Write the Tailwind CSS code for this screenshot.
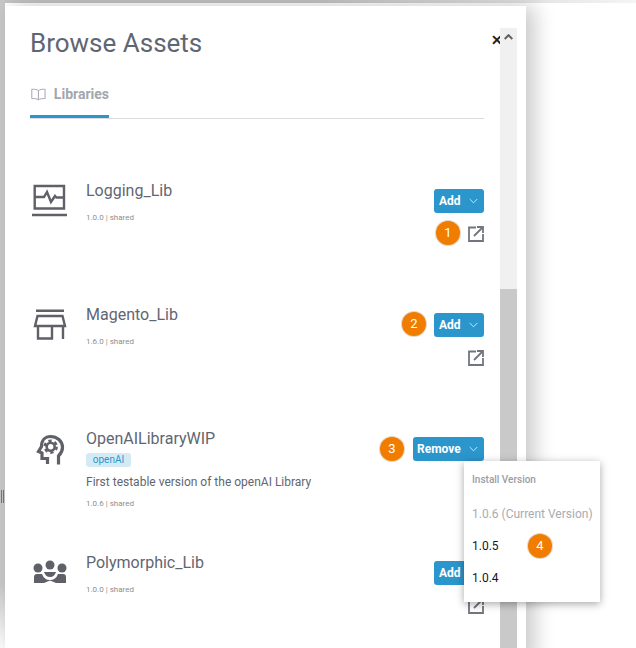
<!DOCTYPE html>
<html lang="en">
  <head>
    <meta charset="UTF-8" />
    <title>Browse Assets</title>
    <script src="https://cdn.jsdelivr.net/npm/@tailwindcss/browser@4"></script>
  </head>
  <body class="bg-white">
    <main class="relative w-[636px] h-[648px] overflow-hidden bg-white font-['Roboto',sans-serif]">
      <!-- backdrop edges -->
      <div class="h-[3px] bg-gradient-to-r from-[#c4c4c4] via-[#c4c4c4] to-[#f4f4f4]"></div>
      <div class="absolute left-0 top-0 w-[5px] h-[648px] bg-gradient-to-b from-[#c8c8c8] via-[#c8c8c8] via-90% to-white"></div>
      <div class="absolute left-[1px] top-[490px] w-[3px] h-[13px] border-x border-[#777]"></div>

      <!-- panel -->
      <section class="relative ml-[5px] mt-[3px] w-[521px] h-[660px] bg-white shadow-[8px_0_20px_rgba(0,0,0,0.22)] pl-[25px] pt-[17px]">
        <h1 class="text-[26px] leading-[40px] text-[#5f6672] font-normal">Browse Assets</h1>

        <div class="w-[454px] mt-[5px] h-[51px] border-b border-[#dcdcdc]">
          <div class="w-[79px] h-[50px] border-b-[3px] border-[#2b96cc] flex items-center gap-[8px] pl-[1px] pt-[5px]">
            <svg class="w-[15px] h-[13px]" viewBox="0 0 15 13" fill="none" stroke="#a3a6ae" stroke-width="1">
              <path d="M7.5 2.5C6 1.3 3 1 .8 1.3v9.400c2.200-.3 5.200 0 6.700 1.100 1.500-1.100 4.500-1.400 6.700-1.100V1.300C12 1 9 1.300 7.500 2.500zM7.500 2.500v9.300" />
            </svg>
            <span class="text-[14px] font-bold text-[#a3a6ae]">Libraries</span>
          </div>
        </div>

        <div class="w-[454px] mt-[60px]">
          <!-- Logging_Lib -->
          <article class="h-[124px] flex">
            <div class="w-[56px] pt-[5px]">
              <svg class="w-[38px] h-[34px]" viewBox="0 0 38 34" fill="none" stroke="#5f6068" stroke-width="2.400">
                <path d="M4.700 2h29.300v22.500H4.700zM4.700 13h9.300l3 -5 4 10 4 -6 1.500 1.500h7.500M2 31h35" />
              </svg>
            </div>
            <div class="flex-1">
              <h2 class="text-[16px] leading-[24px] text-[#5f6672]">Logging_Lib</h2>
              <p class="mt-[9px] text-[8px] leading-[12px] text-[#8b8e95]">1.0.0 | shared</p>
            </div>
            <div class="flex flex-col items-end pt-[10px]">
              <button class="h-[24px] w-[50px] rounded-[3px] bg-[#2b96cc] text-white text-[12px] font-bold flex items-center pl-[5px] gap-[8px]">Add
                <svg class="w-[9px] h-[6px]" viewBox="0 0 9 6" fill="none" stroke="#cfe6f3" stroke-width="1"><path d="M.7 1l3.800 3.800L8.300 1" /></svg>
              </button>
              <svg class="w-[16px] h-[16px] mt-[13px]" viewBox="0 0 16 16" fill="none" stroke="#73757e" stroke-width="1.800"><path d="M8 1.500H1v13.500h14V8M9 1h6v6M15 1L6 10" /></svg>
            </div>
          </article>

          <!-- Magento_Lib -->
          <article class="h-[124px] flex">
            <div class="w-[56px] pt-[5px]">
              <svg class="w-[38px] h-[34px]" viewBox="0 0 38 34" fill="none" stroke="#5f6068" stroke-width="2.400">
                <path d="M6 2.700h28M7.500 8h25l2.500 10H5zM8 18v12.500h14V18M33 18v13" />
              </svg>
            </div>
            <div class="flex-1">
              <h2 class="text-[16px] leading-[24px] text-[#5f6672]">Magento_Lib</h2>
              <p class="mt-[9px] text-[8px] leading-[12px] text-[#8b8e95]">1.6.0 | shared</p>
            </div>
            <div class="flex flex-col items-end pt-[10px]">
              <button class="h-[24px] w-[50px] rounded-[3px] bg-[#2b96cc] text-white text-[12px] font-bold flex items-center pl-[5px] gap-[8px]">Add
                <svg class="w-[9px] h-[6px]" viewBox="0 0 9 6" fill="none" stroke="#cfe6f3" stroke-width="1"><path d="M.7 1l3.800 3.800L8.300 1" /></svg>
              </button>
              <svg class="w-[16px] h-[16px] mt-[13px]" viewBox="0 0 16 16" fill="none" stroke="#73757e" stroke-width="1.800"><path d="M8 1.500H1v13.500h14V8M9 1h6v6M15 1L6 10" /></svg>
            </div>
          </article>

          <!-- OpenAILibraryWIP -->
          <article class="h-[124px] flex">
            <div class="w-[56px] pt-[5px]">
              <svg class="w-[38px] h-[34px]" viewBox="0 0 38 34" fill="none" stroke="#5f6068" stroke-width="3.200">
                <path d="M17.500 32v-5.500h-5.500v-5.500l-3.500-1.500 3-5c0-6.500 4-10 9-10 6.500 0 12 4.500 12 11 0 4-2 6.500-4 8.500v8.500" />
                <circle cx="20.700" cy="14.700" r="6" stroke-width="2.400" stroke-dasharray="3.300 3" />
                <circle cx="20.700" cy="14.700" r="4" stroke-width="2.600" />
              </svg>
            </div>
            <div class="flex-1">
              <h2 class="text-[16px] leading-[24px] text-[#5f6672]">OpenAILibraryWIP</h2>
              <span class="block mt-[2px] w-[45px] h-[14px] rounded-[3px] bg-[#d4ebf6] text-[#2b96cc] text-[10px] leading-[14px] text-center">openAI</span>
              <p class="mt-[6px] text-[12px] leading-[18px] text-[#5f6672]">First testable version of the openAI Library</p>
              <p class="mt-[7px] text-[8px] leading-[12px] text-[#8b8e95]">1.0.6 | shared</p>
            </div>
            <div class="flex flex-col items-end pt-[10px]">
              <button class="h-[24px] w-[71px] rounded-[3px] bg-[#2b96cc] text-white text-[12px] font-bold flex items-center pl-[4px] gap-[8px]">Remove
                <svg class="w-[9px] h-[6px]" viewBox="0 0 9 6" fill="none" stroke="#cfe6f3" stroke-width="1"><path d="M.7 1l3.800 3.800L8.300 1" /></svg>
              </button>
            </div>
          </article>

          <!-- Polymorphic_Lib -->
          <article class="h-[124px] flex">
            <div class="w-[56px] pt-[7px]">
              <svg class="w-[38px] h-[34px]" viewBox="0 0 38 34" fill="#5f6068">
                <circle cx="8" cy="10" r="4.500" /><circle cx="20" cy="7" r="4.500" /><circle cx="32" cy="10" r="4.500" />
                <path d="M4 25v-6a3 3 0 0 1 3-3h5c1.500 4 4 6 8 6s6.500-2 8-6h5a3 3 0 0 1 3 3v6H26l-6-2.500-6 2.500zM14 14h12c-1 3-3 5-6 5s-5-2-6-5z" />
              </svg>
            </div>
            <div class="flex-1">
              <h2 class="text-[16px] leading-[24px] text-[#5f6672]">Polymorphic_Lib</h2>
              <p class="mt-[9px] text-[8px] leading-[12px] text-[#8b8e95]">1.0.0 | shared</p>
            </div>
            <div class="flex flex-col items-end pt-[10px]">
              <button class="h-[24px] w-[50px] rounded-[3px] bg-[#2b96cc] text-white text-[12px] font-bold flex items-center pl-[5px] gap-[8px]">Add</button>
              <svg class="w-[16px] h-[16px] mt-[13px]" viewBox="0 0 16 16" fill="none" stroke="#73757e" stroke-width="1.800"><path d="M8 1.500H1v13.500h14V8M9 1h6v6M15 1L6 10" /></svg>
            </div>
          </article>
        </div>
      </section>

      <!-- close + scrollbar sit over the panel -->
      <span class="absolute left-[491px] top-[33px] text-[14px] leading-[14px] font-bold text-[#222]">✕</span>
      <div class="absolute left-[500px] top-[28px] w-[17px] h-[620px] bg-[#f0f0f0]">
        <svg class="mx-auto mt-[6px] w-[9px] h-[6px]" viewBox="0 0 9 6" fill="none" stroke="#606060" stroke-width="2"><path d="M.7 5l3.800-3.800L8.300 5" /></svg>
        <div class="absolute left-0 top-[261px] w-[17px] h-[359px] bg-[#c9c9c9]"></div>
      </div>

      <!-- version menu -->
      <div class="absolute left-[464px] top-[461px] w-[136px] h-[141px] bg-white shadow-[0_2px_8px_rgba(0,0,0,0.35)] pl-[8px] pt-[13px]">
        <p class="text-[10px] leading-[12px] font-medium text-[#9a9da4]">Install Version</p>
        <ul class="mt-[12px] text-[12px] leading-[32px]">
          <li class="text-[#a9abb0]">1.0.6 (Current Version)</li>
          <li class="text-[#15151c]">1.0.5</li>
          <li class="text-[#15151c]">1.0.4</li>
        </ul>
      </div>

      <!-- callouts -->
      <span class="absolute left-[436px] top-[221px] w-[24px] h-[24px] rounded-full bg-[#f07c00] text-white text-[13px] leading-[24px] text-center shadow-[0_0_0_1px_#e8d5c0]">1</span>
      <span class="absolute left-[402px] top-[312px] w-[24px] h-[24px] rounded-full bg-[#f07c00] text-white text-[13px] leading-[24px] text-center shadow-[0_0_0_1px_#e8d5c0]">2</span>
      <span class="absolute left-[380px] top-[437px] w-[24px] h-[24px] rounded-full bg-[#f07c00] text-white text-[13px] leading-[24px] text-center shadow-[0_0_0_1px_#e8d5c0]">3</span>
      <span class="absolute left-[528px] top-[534px] w-[24px] h-[24px] rounded-full bg-[#f07c00] text-white text-[13px] leading-[24px] text-center shadow-[0_0_0_1px_#e8d5c0]">4</span>
    </main>
  </body>
</html>
